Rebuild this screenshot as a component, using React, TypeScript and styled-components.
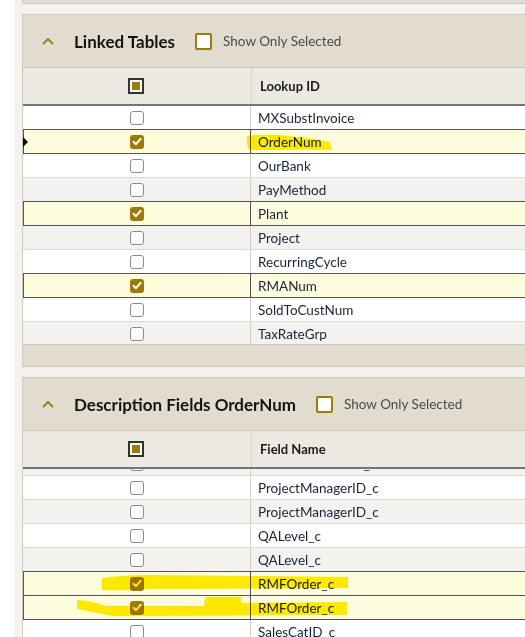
import React from "react";
import styled, { createGlobalStyle } from "styled-components";

const GlobalStyle = createGlobalStyle`
  html, body {
    margin: 0;
    padding: 0;
    background: #ffffff;
    overflow: hidden;
    font-family: "Lato", "Open Sans", sans-serif;
  }
  #root { position: relative; }
`;

const GOLD = "#9d7b07";

const Page = styled.div`
  margin-left: 14px;
  padding-left: 8px;
  width: 640px;
  height: 637px;
  background: #f4f2ee;
  box-sizing: border-box;
  overflow: hidden;
`;

const StubPanel = styled.div`
  height: 3px;
  background: #e2dbd0;
  border: 1px solid #cfc9bf;
  border-top: none;
`;

const Panel = styled.section`
  margin-top: 10px;
  background: #e2dbd0;
  border: 1px solid #cfc9bf;
`;

const PanelHeader = styled.div`
  height: 52px;
  display: flex;
  align-items: center;
  padding-left: 19px;
`;

const Chevron = styled.svg`
  width: 12px;
  height: 8px;
  flex: none;
`;

const Title = styled.h2`
  margin: 0 0 0 20px;
  font-size: 17px;
  font-weight: 700;
  color: #141414;
  white-space: nowrap;
`;

const ShowOnly = styled.label`
  display: flex;
  align-items: center;
  margin-left: 20px;
  gap: 11px;
  font-size: 13.5px;
  color: #4a4a4a;
  white-space: nowrap;
`;

const GoldBox = styled.span`
  width: 17px;
  height: 17px;
  box-sizing: border-box;
  border: 2px solid ${GOLD};
  border-radius: 2px;
  background: #ffffff;
`;

const Grid = styled.div`
  background: #ffffff;
`;

const HeadRow = styled.div`
  display: grid;
  grid-template-columns: 229px 1fr;
  height: 36px;
  background: #ece8e2;
  border-top: 1px solid #cfc9bf;
  border-bottom: 2px solid #757575;
`;

const HeadCheckCell = styled.div`
  display: flex;
  align-items: center;
  justify-content: center;
  border-right: 1px dotted #c9c4bc;
  padding-right: 2px;
`;

const HeadText = styled.div`
  display: flex;
  align-items: center;
  padding-left: 8px;
  font-size: 13px;
  font-weight: 700;
  color: #1a1a1a;
`;

const AllBox = styled.span`
  width: 16px;
  height: 16px;
  box-sizing: border-box;
  border: 2px solid #333333;
  padding: 2px;
  background: #ffffff;
  &::after {
    content: "";
    display: block;
    width: 8px;
    height: 8px;
    background: ${GOLD};
  }
`;

const Body = styled.div<{ $height: number }>`
  height: ${(p) => p.$height}px;
  overflow: hidden;
`;

const Scroller = styled.div<{ $offset: number }>`
  margin-top: -${(p) => p.$offset}px;
`;

const Row = styled.div<{ $alt: boolean; $selected: boolean }>`
  position: relative;
  display: grid;
  grid-template-columns: 228px 1fr;
  height: 24px;
  box-sizing: border-box;
  background: ${(p) => (p.$selected ? "#fdfddd" : p.$alt ? "#f4f2ee" : "#ffffff")};
  border-bottom: 1px solid ${(p) => (p.$selected ? "#555555" : "#dcdad6")};
  box-shadow: ${(p) => (p.$selected ? "0 -1px 0 #555555, inset 1px 0 0 #555555" : "none")};
`;

const CheckCell = styled.div<{ $selected: boolean }>`
  display: flex;
  align-items: center;
  justify-content: center;
  border-right: 1px solid ${(p) => (p.$selected ? "#555555" : "#d4d1cc")};
`;

const TextCell = styled.div`
  display: flex;
  align-items: center;
  padding-left: 7px;
  font-size: 13.5px;
  color: #17243a;
  white-space: nowrap;
`;

const Box = styled.span<{ $checked: boolean }>`
  width: 14px;
  height: 14px;
  box-sizing: border-box;
  border-radius: 3px;
  border: ${(p) => (p.$checked ? "none" : "1.5px solid #8c8c8c")};
  background: ${(p) => (p.$checked ? GOLD : "#ffffff")};
  display: flex;
  align-items: center;
  justify-content: center;
`;

const Pointer = styled.span`
  position: absolute;
  left: 0;
  top: 7px;
  width: 0;
  height: 0;
  border-top: 5px solid transparent;
  border-bottom: 5px solid transparent;
  border-left: 5px solid #000000;
`;

const Footer = styled.div<{ $height: number }>`
  height: ${(p) => p.$height}px;
  border-top: 1px solid #cfc9bf;
  background: #e2dbd0;
`;

const Marker = styled.svg`
  position: absolute;
  left: 0;
  top: 0;
  width: 525px;
  height: 637px;
  pointer-events: none;
  mix-blend-mode: multiply;
`;

type Item = { name: string; checked?: boolean; pointer?: boolean };

const linked: Item[] = [
  { name: "MXSubstInvoice" },
  { name: "OrderNum", checked: true, pointer: true },
  { name: "OurBank" },
  { name: "PayMethod" },
  { name: "Plant", checked: true },
  { name: "Project" },
  { name: "RecurringCycle" },
  { name: "RMANum", checked: true },
  { name: "SoldToCustNum" },
  { name: "TaxRateGrp" },
];

const fields: Item[] = [
  { name: "PlaceOfIncoTerms_c" },
  { name: "ProjectManagerID_c" },
  { name: "ProjectManagerID_c" },
  { name: "QALevel_c" },
  { name: "QALevel_c" },
  { name: "RMFOrder_c", checked: true },
  { name: "RMFOrder_c", checked: true },
  { name: "SalesCatID_c" },
];

const Check = () => (
  <svg width="10" height="9" viewBox="0 0 10 9">
    <path d="M1.5 4.8 L4 7.2 L8.6 1.8" fill="none" stroke="#ffffff" strokeWidth="2" strokeLinecap="round" strokeLinejoin="round" />
  </svg>
);

const ChevronUp = () => (
  <Chevron viewBox="0 0 12 8">
    <path d="M1 7 L6 2 L11 7" fill="none" stroke={GOLD} strokeWidth="1.8" />
  </Chevron>
);

function DataGrid({
  column,
  items,
  height,
  offset,
  stripeStart,
}: {
  column: string;
  items: Item[];
  height: number;
  offset: number;
  stripeStart: number;
}) {
  return (
    <Grid>
      <HeadRow>
        <HeadCheckCell>
          <AllBox />
        </HeadCheckCell>
        <HeadText>{column}</HeadText>
      </HeadRow>
      <Body $height={height}>
        <Scroller $offset={offset}>
          {items.map((it, i) => (
            <Row key={i} $alt={(i + stripeStart) % 2 === 1} $selected={!!it.checked}>
              {it.pointer && <Pointer />}
              <CheckCell $selected={!!it.checked}>
                <Box $checked={!!it.checked}>{it.checked && <Check />}</Box>
              </CheckCell>
              <TextCell>{it.name}</TextCell>
            </Row>
          ))}
        </Scroller>
      </Body>
    </Grid>
  );
}

function SectionPanel({ title, children }: { title: string; children: React.ReactNode }) {
  return (
    <Panel>
      <PanelHeader>
        <ChevronUp />
        <Title>{title}</Title>
        <ShowOnly>
          <GoldBox />
          Show Only Selected
        </ShowOnly>
      </PanelHeader>
      {children}
    </Panel>
  );
}

export default function App() {
  return (
    <>
      <GlobalStyle />
      <Page>
        <StubPanel />
        <SectionPanel title="Linked Tables">
          <DataGrid column="Lookup ID" items={linked} height={238} offset={0} stripeStart={0} />
          <Footer $height={21} />
        </SectionPanel>
        <SectionPanel title="Description Fields OrderNum">
          <DataGrid column="Field Name" items={fields} height={400} offset={17} stripeStart={1} />
        </SectionPanel>
      </Page>
      <Marker viewBox="0 0 525 637">
        <path d="M247 136 Q262 134 278 135 Q306 137 330 142 L332 150 Q300 149 276 150 L250 150 Q246 148 247 136 Z" fill="#ffea00" />
        <path d="M102 578 Q122 575 150 575 L348 577 L348 588 L150 589 Q122 591 102 590 Z" fill="#ffea00" />
        <path d="M77 600 Q92 601 106 606 L204 606 L205 597 L241 597 L241 603 L347 602 L347 615 L112 616 Q92 612 77 609 Z" fill="#ffea00" />
      </Marker>
    </>
  );
}
